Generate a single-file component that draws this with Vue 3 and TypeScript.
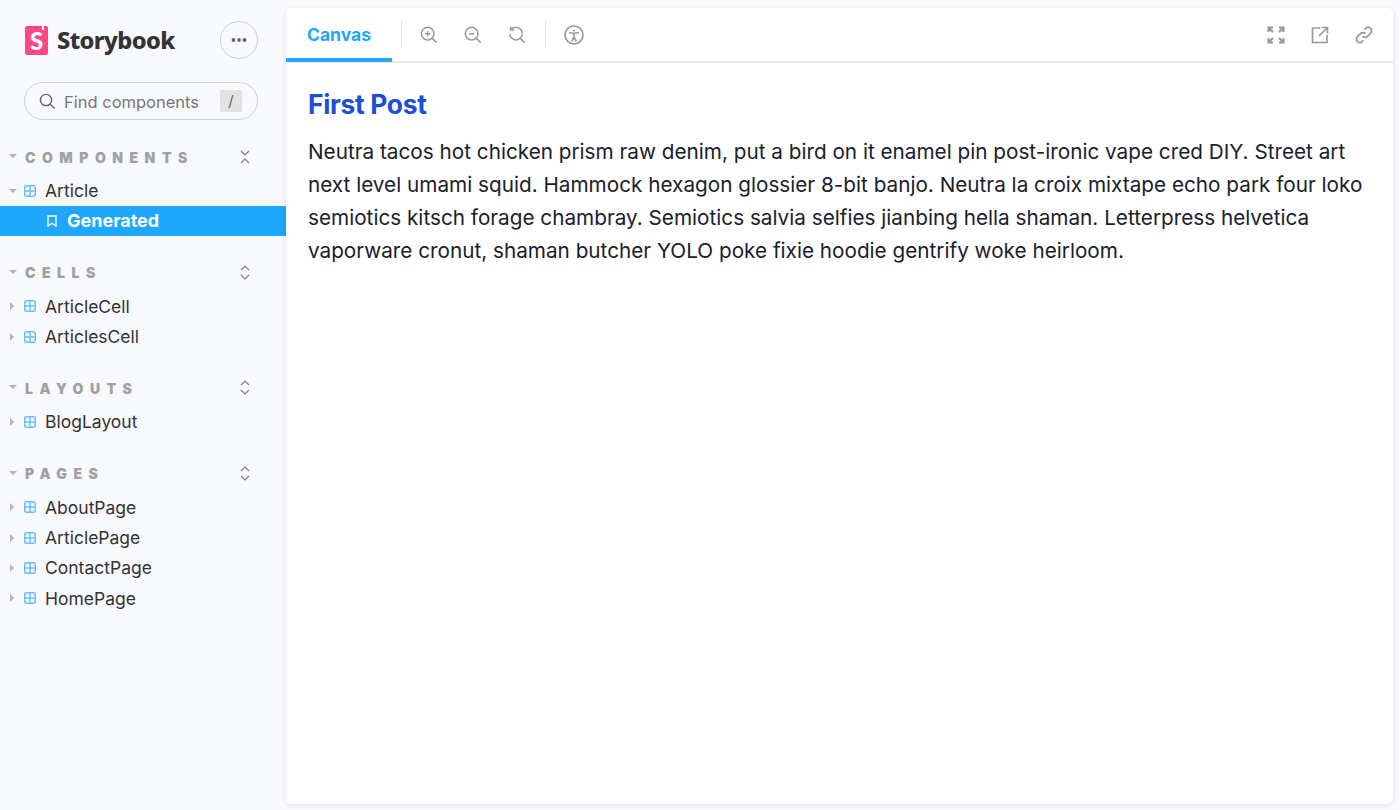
<script setup lang="ts">
interface Section {
  title: string
  expanded: boolean
  items: string[]
}

const sections: Section[] = [
  { title: 'Components', expanded: true, items: ['Article'] },
  { title: 'Cells', expanded: false, items: ['ArticleCell', 'ArticlesCell'] },
  { title: 'Layouts', expanded: false, items: ['BlogLayout'] },
  { title: 'Pages', expanded: false, items: ['AboutPage', 'ArticlePage', 'ContactPage', 'HomePage'] }
]
</script>

<template>
  <div class="shell">
    <aside class="sidebar">
      <div class="brand-row">
        <div class="brand">
          <span class="brand-mark">S</span>
          <span class="brand-name">Storybook</span>
        </div>
        <button class="menu-btn" aria-label="Menu">
          <svg width="16" height="4" viewBox="0 0 16 4"><circle cx="2.5" cy="2" r="1.9" /><circle cx="8" cy="2" r="1.9" /><circle cx="13.5" cy="2" r="1.9" /></svg>
        </button>
      </div>

      <div class="search">
        <svg class="search-icon" width="17" height="17" viewBox="0 0 17 17" fill="none"><circle cx="7" cy="7" r="5.6" /><path d="M11.2 11.2 15.6 15.6" /></svg>
        <span class="search-label">Find components</span>
        <kbd class="search-key">/</kbd>
      </div>

      <section v-for="section in sections" :key="section.title" class="group">
        <header class="group-head">
          <span class="caret caret-down group-caret"></span>
          <span class="group-title">{{ section.title }}</span>
          <svg v-if="section.expanded" class="chevrons" width="10" height="14" viewBox="0 0 10 14" fill="none"><path d="M1 1 5 5l4-4M1 13l4-4 4 4" /></svg>
          <svg v-else class="chevrons raised" width="10" height="15" viewBox="0 0 10 15" fill="none"><path d="M1 5 5 1l4 4M1 10l4 4 4-4" /></svg>
        </header>
        <ul class="tree">
          <li v-for="item in section.items" :key="item">
            <div class="tree-row">
              <span class="caret" :class="section.expanded ? 'caret-down' : 'caret-right'"></span>
              <svg class="grid-icon" width="12" height="12" viewBox="0 0 12 12" fill="none"><rect x=".7" y=".7" width="10.600" height="10.600" rx="2" /><path d="M6 .7v10.600M.7 6h10.600" /></svg>
              <span>{{ item }}</span>
            </div>
            <div v-if="section.expanded" class="tree-row story">
              <svg class="mark-icon" width="10" height="12" viewBox="0 0 10 12" fill="none"><path d="M1 1h8v10L5 8.200 1 11z" /></svg>
              <span>Generated</span>
            </div>
          </li>
        </ul>
      </section>
    </aside>

    <main class="panel">
      <nav class="toolbar">
        <div class="tab">Canvas</div>
        <span class="divider"></span>
        <div class="tools">
          <svg class="tool" viewBox="0 0 20 20"><circle cx="8.500" cy="8.500" r="7" /><path d="M13.500 13.500 18.500 18.500M8.500 5.500v6M5.500 8.500h6" /></svg>
          <svg class="tool" viewBox="0 0 20 20"><circle cx="8.500" cy="8.500" r="7" /><path d="M13.500 13.500 18.500 18.500M5.500 8.500h6" /></svg>
          <svg class="tool" viewBox="0 0 20 20"><path d="M3.200 4.200A7 7 0 1 1 1.800 9M3 .8v3.700h3.700M13.500 13.500 18.500 18.500" /></svg>
        </div>
        <span class="divider"></span>
        <svg class="tool a11y" viewBox="0 0 20 20"><circle cx="10" cy="10" r="9" /><circle cx="10" cy="5.500" r="1.100" class="solid" /><path d="M5 7.500c3.300 1 6.700 1 10 0M10 8.500v3.500M10 12l-2.300 4.500M10 12l2.300 4.500" /></svg>
        <div class="tools-end">
          <svg class="tool bold" viewBox="0 0 18 18"><path d="M1.500 6V1.500H6M12 1.500h4.500V6M1.500 12v4.500H6M16.500 12v4.500H12M2 2l4 4M16 2l-4 4M2 16l4-4M16 16l-4-4" /></svg>
          <svg class="tool" viewBox="0 0 18 18"><path d="M9 2H1.500v14.500H16V9M10.500 1.500H16.500V7.500M16 2 8 10" /></svg>
          <svg class="tool" viewBox="0 0 18 18"><path d="M7.600 10.400a3.400 3.400 0 0 0 4.900 0l3.100-3.100a3.400 3.400 0 0 0-4.900-4.900L9.400 3.700M10.400 7.600a3.400 3.400 0 0 0-4.900 0l-3.100 3.100a3.400 3.400 0 0 0 4.900 4.900l1.300-1.300" /></svg>
        </div>
      </nav>

      <article class="post">
        <h1>First Post</h1>
        <p>Neutra tacos hot chicken prism raw denim, put a bird on it enamel pin post-ironic vape cred DIY. Street art next level umami squid. Hammock hexagon glossier 8-bit banjo. Neutra la croix mixtape echo park four loko semiotics kitsch forage chambray. Semiotics salvia selfies jianbing hella shaman. Letterpress helvetica vaporware cronut, shaman butcher YOLO poke fixie hoodie gentrify woke heirloom.</p>
      </article>
    </main>
  </div>
</template>

<style>
html,
body {
  margin: 0;
  background: #f6f9fc;
}
</style>

<style scoped>
.shell {
  width: 1400px;
  height: 810px;
  display: flex;
  overflow: hidden;
  background: #f8f9fd;
  font-family: Inter, "Liberation Sans", sans-serif;
  color: #333;
}

.sidebar {
  width: 286px;
  flex: none;
  padding-top: 21px;
  box-sizing: border-box;
}

.brand-row {
  display: flex;
  align-items: center;
  justify-content: space-between;
  height: 38px;
  margin: 0 28px 0 25px;
}

.brand {
  display: flex;
  align-items: center;
  gap: 9px;
}

.brand-mark {
  position: relative;
  width: 23px;
  height: 29px;
  border-radius: 2px;
  background: #ff4785;
  color: #fff;
  font: 900 24px/29px Lato, sans-serif;
  text-align: center;
}

.brand-mark::after {
  content: "";
  position: absolute;
  top: 0;
  right: 4px;
  width: 2px;
  height: 4px;
  background: #fff;
}

.brand-name {
  font: 800 23.600px/30px "Noto Sans", sans-serif;
  letter-spacing: -0.600px;
  color: #333;
}

.menu-btn {
  display: flex;
  align-items: center;
  justify-content: center;
  width: 38px;
  height: 38px;
  padding: 0;
  border: 1px solid #cfd0d3;
  border-radius: 50%;
  background: transparent;
}

.menu-btn svg {
  fill: #666;
}

.search {
  display: flex;
  align-items: center;
  height: 38px;
  margin: 23px 28px 0 24px;
  padding: 0 15px 0 14px;
  box-sizing: border-box;
  border: 1px solid #cfd0d3;
  border-radius: 19px;
  font-size: 16.500px;
  color: #777;
}

.search-icon {
  stroke: #666;
  stroke-width: 1.400;
  margin-right: 8px;
}

.search-label {
  flex: 1;
  padding-top: 1px;
  white-space: nowrap;
}

.search-key {
  width: 22px;
  height: 22px;
  border-radius: 2px;
  background: #e2e2e3;
  font: 400 15px/22px Inter, sans-serif;
  text-align: center;
  color: #666;
}

.group {
  margin-top: 24.500px;
}

.group:first-of-type {
  margin-top: 25px;
}

.group-head {
  position: relative;
  display: flex;
  align-items: center;
  justify-content: space-between;
  height: 24px;
  margin-bottom: 6.500px;
  padding: 0 36px 0 25px;
}

.group-caret {
  position: absolute;
  left: 9px;
  top: 9px;
}

.group-title {
  font-size: 14px;
  font-weight: 900;
  letter-spacing: 6.500px;
  text-transform: uppercase;
  color: #a1a1a1;
}

.chevrons {
  stroke: #808080;
  stroke-width: 1.200;
}

.chevrons.raised {
  margin-top: -1px;
}

.tree {
  margin: 0;
  padding: 0;
  list-style: none;
}

.tree-row {
  display: flex;
  align-items: center;
  height: 30.330px;
  padding-left: 9px;
  font-size: 17.500px;
  color: #333;
}

.caret {
  width: 0;
  height: 0;
  flex: none;
}

.caret-down {
  margin-right: 4px;
  border-left: 4px solid transparent;
  border-right: 4px solid transparent;
  border-top: 4px solid #b3b3b3;
}

.caret-right {
  margin-left: 1px;
  margin-right: 7px;
  border-top: 4px solid transparent;
  border-bottom: 4px solid transparent;
  border-left: 4px solid #b3b3b3;
}

.grid-icon {
  flex: none;
  margin: 0 9px 0 3px;
  stroke: #66bdff;
  stroke-width: 1.500;
}

.story {
  padding-left: 47px;
  background: #1ea7fd;
  font-size: 18px;
  font-weight: 700;
  color: #fff;
  gap: 10px;
}

.mark-icon {
  stroke: #fff;
  stroke-width: 1.300;
}

.panel {
  display: flex;
  flex-direction: column;
  width: 1107px;
  height: 796px;
  margin-top: 8px;
  border-radius: 5px;
  background: #fff;
  box-shadow: 0 1px 5px rgba(0, 0, 0, 0.1);
}

.toolbar {
  display: flex;
  align-items: center;
  flex: none;
  height: 55px;
  box-sizing: border-box;
  padding-right: 20px;
  border-bottom: 2px solid #e9e9ea;
}

.tab {
  display: flex;
  align-items: center;
  justify-content: center;
  width: 106px;
  height: 55px;
  box-sizing: border-box;
  padding-top: 3px;
  border-bottom: 4px solid #1ea7fd;
  font-size: 17.500px;
  font-weight: 700;
  color: #1ea7fd;
}

.divider {
  width: 1px;
  height: 27px;
  margin: 0 9px;
  background: #dfdfe0;
}

.tools {
  display: flex;
  gap: 26px;
  margin: 0 10px 0 9px;
}

.tools-end {
  display: flex;
  gap: 26px;
  margin-left: auto;
}

.tool {
  width: 18px;
  height: 18px;
  fill: none;
  stroke: #999;
  stroke-width: 1.700;
}

.tool.bold {
  stroke-width: 2.200;
}

.a11y {
  width: 20px;
  height: 20px;
  margin-left: 9px;
}

.a11y .solid {
  fill: #999;
  stroke: none;
}

.post {
  padding: 21px 22px 0;
  color: #1a202c;
}

.post h1 {
  margin: 0;
  font-size: 26.400px;
  line-height: 40px;
  font-weight: 700;
  letter-spacing: -0.300px;
  color: #1d4ed8;
}

.post p {
  margin: 11px 0 0;
  font-size: 20.720px;
  line-height: 33px;
}
</style>
